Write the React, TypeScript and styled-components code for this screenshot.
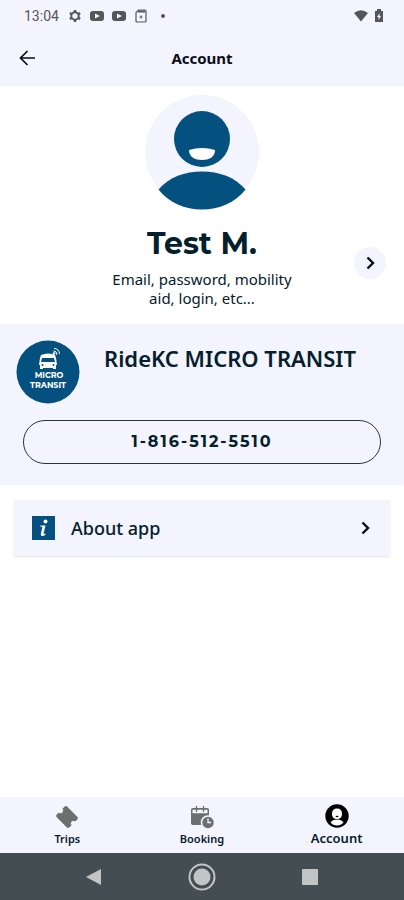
import React from "react";
import styled, { createGlobalStyle } from "styled-components";

const color = {
  tint: "#f3f4fd",
  blue: "#04507f",
  ink: "#04202d",
  black: "#0b0d14",
  status: "#55565a",
  muted: "#6d6e70",
};

const GlobalStyle = createGlobalStyle`
  *, *::before, *::after { box-sizing: border-box; }
  body {
    margin: 0;
    background: #fff;
    color: ${color.ink};
    font-family: "Noto Sans", "Open Sans", sans-serif;
  }
  button { font: inherit; color: inherit; border: 0; padding: 0; background: none; cursor: pointer; }
  a { color: inherit; text-decoration: none; }
  h1, h2, p { margin: 0; }
  svg { display: block; flex: none; }
`;

const Screen = styled.div`
  display: flex;
  flex-direction: column;
  min-height: 100vh;
`;

const StatusBar = styled.div`
  display: flex;
  align-items: center;
  height: 32px;
  padding: 0 20px 0 24px;
  background: ${color.tint};
  color: ${color.status};
`;

const Clock = styled.span`
  margin-right: 9px;
  font: 14px/20px Roboto, sans-serif;
`;

const StatusIcons = styled.div`
  display: flex;
  flex: 1;
  align-items: center;
  gap: 8px;
`;

const SystemIcons = styled.div`
  display: flex;
  align-items: center;
  gap: 5px;
`;

const Header = styled.header`
  display: grid;
  grid-template-columns: 56px 1fr 56px;
  align-items: center;
  height: 54px;
  padding-bottom: 2px;
  background: ${color.tint};
  color: ${color.black};
`;

const BackButton = styled.button`
  display: flex;
  align-items: center;
  height: 40px;
  padding-left: 19px;
`;

const Title = styled.h1`
  font-size: 15px;
  line-height: 20px;
  font-weight: 700;
  text-align: center;
`;

const Main = styled.main`
  display: flex;
  flex: 1;
  flex-direction: column;
`;

const Profile = styled.section`
  display: grid;
  grid-template-columns: 1fr minmax(0, 200px) 1fr;
  align-items: end;
  padding: 8px 18px 16px;
`;

const Person = styled.div`
  display: flex;
  grid-column: 2;
  flex-direction: column;
  align-items: center;
  text-align: center;
`;

const Name = styled.h2`
  margin: 14px 0 6px;
  font-family: Montserrat, "Open Sans", sans-serif;
  font-size: 30px;
  line-height: 40px;
  font-weight: 700;
`;

const Details = styled.p`
  padding: 0 8px;
  font-size: 15px;
  line-height: 19px;
`;

const RoundButton = styled.button`
  display: flex;
  align-items: center;
  justify-content: center;
  justify-self: end;
  width: 32px;
  height: 32px;
  margin-bottom: 29px;
  border-radius: 50%;
  background: ${color.tint};
  color: ${color.black};
`;

const Service = styled.section`
  padding: 16px 16px 21px;
  background: ${color.tint};
`;

const ServiceRow = styled.div`
  display: flex;
  align-items: flex-start;
  gap: 24px;
`;

const ServiceName = styled.h2`
  padding-top: 3px;
  font-size: 22px;
  line-height: 30px;
  font-weight: 600;
`;

const PhoneLink = styled.a`
  display: flex;
  align-items: center;
  justify-content: center;
  height: 44px;
  margin: 16px 7px 0;
  border: 1px solid #26363f;
  border-radius: 22px;
  font-family: Montserrat, "Open Sans", sans-serif;
  font-size: 16px;
  line-height: 20px;
  font-weight: 700;
  letter-spacing: 2px;
`;

const MenuButton = styled.button`
  display: flex;
  align-items: center;
  gap: 16px;
  height: 56px;
  margin: 15px 14px;
  padding: 0 18px;
  background: ${color.tint};
  box-shadow: 0 1px 2px #0000001a;
`;

const MenuLabel = styled.span`
  flex: 1;
  font-size: 18px;
  line-height: 24px;
  font-weight: 500;
  text-align: left;
`;

const TabBar = styled.nav`
  display: grid;
  grid-template-columns: repeat(3, 1fr);
  height: 56px;
  background: ${color.tint};
`;

const Tab = styled.a<{ $active?: boolean }>`
  display: flex;
  flex-direction: column;
  align-items: center;
  justify-content: flex-end;
  gap: 2px;
  padding-bottom: ${(p) => (p.$active ? 7 : 6)}px;
  color: ${(p) => (p.$active ? color.black : color.muted)};
`;

const TabLabel = styled.span<{ $active?: boolean }>`
  color: ${color.ink};
  font-size: ${(p) => (p.$active ? 13 : 11)}px;
  line-height: 16px;
  font-weight: 600;
`;

const SystemBar = styled.div`
  display: flex;
  align-items: center;
  justify-content: center;
  gap: 80px;
  height: 47px;
  background: #444d52;
  color: #c1c5c5;
`;

const SystemButton = styled.button`
  display: flex;
  align-items: center;
  justify-content: center;
  width: 28px;
  height: 28px;
`;

const VideoIcon = () => (
  <svg width="14" height="12" viewBox="0 0 14 12" aria-hidden="true">
    <rect y="1" width="14" height="10" rx="3" fill="currentColor" />
    <path d="M5 3.5 10 6 5 8.5Z" fill={color.tint} />
  </svg>
);

const Chevron = () => (
  <svg width="14" height="14" viewBox="0 0 14 14" fill="none" aria-hidden="true">
    <path d="m4.500 1.500 5.500 5.500-5.500 5.500" stroke={color.black} strokeWidth="2.400" />
  </svg>
);

const Avatar = () => (
  <svg width="116" height="116" viewBox="0 0 116 116" role="img" aria-label="Profile picture">
    <circle cx="58" cy="58" r="57" fill={color.tint} />
    <circle cx="58" cy="45" r="28" fill={color.blue} />
    <path d="M45 56Q58 52 71 56C71 63 65 66 58 66S45 63 45 56Z" fill="#fff" />
    <path d="M14.500 95.500C25 83 41 77.500 58 77.500S91 83 101.500 95.500C91 109 75 115.500 58 115.500S25 109 14.500 95.500Z" fill={color.blue} />
  </svg>
);

const ServiceLogo = () => (
  <svg width="64" height="64" viewBox="0 0 64 64" role="img" aria-label="Micro Transit">
    <circle cx="32" cy="32" r="31.500" fill={color.blue} />
    <g fill="#fff">
      <path d="M25 15q7-3 14 0l1 3 1 7h-1v4h-3v-1H27v1h-3v-4h-1l1-7Z" />
      <path d="M26 18h12l1 4H25Z" fill={color.blue} />
      <circle cx="26.500" cy="25" r="1" fill={color.blue} />
      <circle cx="37.500" cy="25" r="1" fill={color.blue} />
      <circle cx="38" cy="13.500" r="1.300" />
      <path d="M37.500 11q3.500 0 3.500 4M38 8.500q5 0 5.500 5.500" fill="none" stroke="#fff" />
      <g fontFamily="Montserrat, Lato, sans-serif" fontWeight="700" fontSize="8" textAnchor="middle">
        <text x="33" y="38">MICRO</text>
        <text x="32" y="48">TRANSIT</text>
      </g>
    </g>
  </svg>
);

const InfoIcon = () => (
  <svg width="23" height="24" viewBox="0 0 23 24" aria-hidden="true">
    <rect width="23" height="24" fill={color.blue} />
    <circle cx="13.500" cy="5.500" r="2" fill="#fff" />
    <path d="M8.500 9.500h5l-2 8.500 2-.5v1q-1.500 1.500-3.200 1.500-2 0-1.500-2l1.500-7-2-.5Z" fill="#fff" />
  </svg>
);

export default function App() {
  return (
    <Screen>
      <GlobalStyle />
      <StatusBar>
        <Clock>13:04</Clock>
        <StatusIcons>
          <svg width="14" height="14" viewBox="0 0 14 14" fill="none" stroke="currentColor" aria-hidden="true">
            <circle cx="7" cy="7" r="3.700" strokeWidth="2" />
            <path d="M7 1v2m0 8v2M1.800 4l1.700 1m7 4 1.700 1m-10.400 0 1.700-1m7-4 1.700-1" strokeWidth="2.400" />
          </svg>
          <VideoIcon />
          <VideoIcon />
          <svg width="14" height="14" viewBox="0 0 14 14" fill="none" stroke="currentColor" aria-hidden="true">
            <path d="M4.500 1H11a1 1 0 0 1 1 1v10a1 1 0 0 1-1 1H3a1 1 0 0 1-1-1V3.500Z" strokeWidth="1.200" />
            <path d="M4 2.500h7" strokeWidth="2" />
            <path d="M7 6.500v3M5.500 8h3" />
          </svg>
          <svg width="14" height="14" viewBox="0 0 14 14" aria-hidden="true">
            <circle cx="7" cy="7" r="2" fill="currentColor" />
          </svg>
        </StatusIcons>
        <SystemIcons>
          <svg width="16" height="14" viewBox="0 0 16 14" fill="currentColor" aria-hidden="true">
            <path d="M1 4Q8-1.500 15 4L8 12.500Z" />
          </svg>
          <svg width="10" height="14" viewBox="0 0 10 14" aria-hidden="true">
            <path d="M3 0h4v2h2v11H1V2h2Z" fill="currentColor" />
            <path d="M5.500 4 3 8h1.500v3L7 7H5.500Z" fill={color.tint} />
          </svg>
        </SystemIcons>
      </StatusBar>

      <Header>
        <BackButton aria-label="Back">
          <svg width="17" height="16" viewBox="0 0 17 16" fill="none" stroke="currentColor" strokeWidth="1.700" aria-hidden="true">
            <path d="M16 8H2M8.500 1 1.500 8l7 7" />
          </svg>
        </BackButton>
        <Title>Account</Title>
      </Header>

      <Main>
        <Profile>
          <Person>
            <Avatar />
            <Name>Test M.</Name>
            <Details>Email, password, mobility aid, login, etc...</Details>
          </Person>
          <RoundButton aria-label="Edit profile">
            <Chevron />
          </RoundButton>
        </Profile>

        <Service>
          <ServiceRow>
            <ServiceLogo />
            <ServiceName>RideKC MICRO TRANSIT</ServiceName>
          </ServiceRow>
          <PhoneLink href="tel:1-816-512-5510">1-816-512-5510</PhoneLink>
        </Service>

        <MenuButton>
          <InfoIcon />
          <MenuLabel>About app</MenuLabel>
          <Chevron />
        </MenuButton>
      </Main>

      <TabBar>
        <Tab href="#trips">
          <svg width="24" height="24" viewBox="0 0 24 24" aria-hidden="true">
            <path
              transform="rotate(45 12 12)"
              d="M5 4.500h14a2 2 0 0 1 2 2v3a2.500 2.500 0 0 0 0 5v3a2 2 0 0 1-2 2H5a2 2 0 0 1-2-2v-3a2.500 2.500 0 0 0 0-5v-3a2 2 0 0 1 2-2Z"
              fill="currentColor"
            />
          </svg>
          <TabLabel>Trips</TabLabel>
        </Tab>
        <Tab href="#booking">
          <svg width="24" height="24" viewBox="0 0 24 24" fill="none" stroke="currentColor" aria-hidden="true">
            <rect x="1" y="3" width="18" height="17" rx="2" fill="currentColor" stroke="none" />
            <path d="M2.500 6.500h15" stroke={color.tint} strokeWidth="3.500" />
            <path d="M6.500 1v6M13.500 1v6" strokeWidth="1.300" />
            <circle cx="18" cy="17.500" r="6.500" fill="currentColor" stroke={color.tint} strokeWidth="1.500" />
            <path d="M18 13.500v4h3" stroke={color.tint} strokeWidth="1.300" />
          </svg>
          <TabLabel>Booking</TabLabel>
        </Tab>
        <Tab href="#account" $active aria-current="page">
          <svg width="24" height="24" viewBox="0 0 24 24" aria-hidden="true">
            <circle cx="12" cy="12" r="11.700" fill="#000" />
            <path d="M7 10q0-5.500 5-5.500t5 5.500q0 5-5 5t-5-5Z" fill="#fff" />
            <path d="M10.500 12q1.500-.7 3 0-.3 1.300-1.500 1.300t-1.500-1.300Z" fill="#000" />
            <path d="M5.500 18.500q2-3 6.500-3t6.500 3q-2.500 3-6.500 3t-6.500-3Z" fill="#fff" />
          </svg>
          <TabLabel $active>Account</TabLabel>
        </Tab>
      </TabBar>

      <SystemBar>
        <SystemButton aria-label="System back">
          <svg width="16" height="18" viewBox="0 0 16 18" aria-hidden="true">
            <path d="M0 9 15 1v16Z" fill="currentColor" />
          </svg>
        </SystemButton>
        <SystemButton aria-label="Home">
          <svg width="28" height="28" viewBox="0 0 28 28" aria-hidden="true">
            <circle cx="14" cy="14" r="12.500" fill="none" stroke="currentColor" strokeWidth="2" />
            <circle cx="14" cy="14" r="8.500" fill="currentColor" />
          </svg>
        </SystemButton>
        <SystemButton aria-label="Recent apps">
          <svg width="16" height="16" viewBox="0 0 16 16" aria-hidden="true">
            <rect width="16" height="16" rx="1" fill="currentColor" />
          </svg>
        </SystemButton>
      </SystemBar>
    </Screen>
  );
}
